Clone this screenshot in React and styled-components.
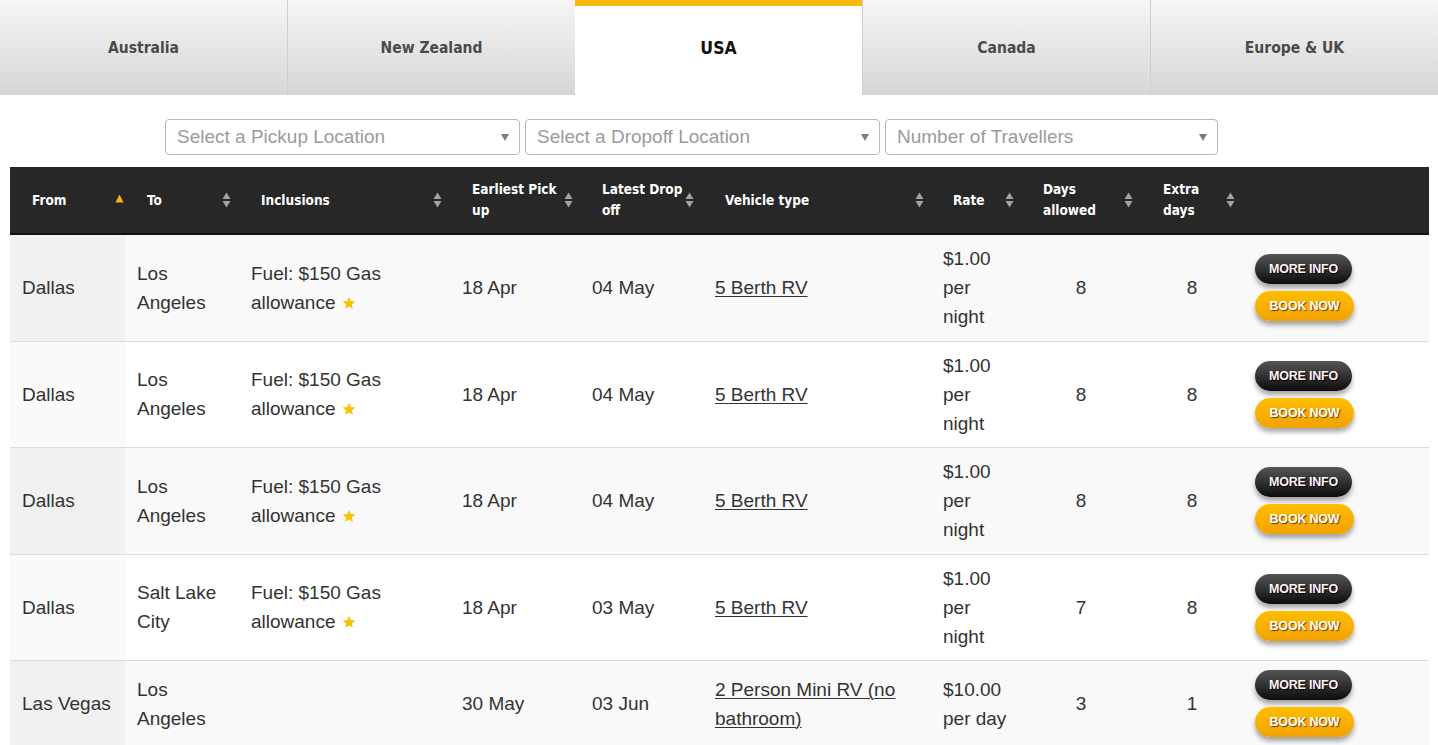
import React from 'react';
import styled, { createGlobalStyle } from 'styled-components';

const Global = createGlobalStyle`
  html, body { margin: 0; padding: 0; background: #fff; }
  body { font-family: "Liberation Sans", Arial, sans-serif; color: #333; }
`;

const condensed = `"DejaVu Sans Condensed", "DejaVu Sans", sans-serif`;

const TabBar = styled.nav`
  display: flex;
  height: 95px;
`;

const Tab = styled.div`
  flex: 1;
  box-sizing: border-box;
  display: flex;
  align-items: center;
  justify-content: center;
  font-family: ${condensed};
  font-stretch: condensed;
  font-weight: bold;
  font-size: ${p => (p.$active ? '17.5px' : '15.5px')};
  color: ${p => (p.$active ? '#111' : '#4a4a4a')};
  background: ${p => (p.$active ? '#fff' : 'linear-gradient(#f6f6f6, #d6d6d6)')};
  border-top: ${p => (p.$active ? '6px solid #fbb812' : '0')};
  padding-bottom: ${p => (p.$active ? '6px' : '0')};
  border-left: ${p => (p.$first || p.$active ? '0' : '1px solid #cdced6')};
`;

const Filters = styled.div`
  display: flex;
  gap: 5px;
  padding: 24px 0 0 165px;
`;

const SelectBox = styled.div`
  box-sizing: border-box;
  width: ${p => p.$w}px;
  height: 36px;
  border: 1px solid #b9b9b9;
  border-radius: 4px;
  background: #fff;
  display: flex;
  align-items: center;
  justify-content: space-between;
  padding: 0 10px 0 11px;
  font-size: 19px;
  color: #9b9b9b;
`;

const Caret = styled.span`
  width: 0;
  height: 0;
  border-left: 4.5px solid transparent;
  border-right: 4.5px solid transparent;
  border-top: 7px solid #7d7d7d;
`;

const Table = styled.table`
  margin: 12px 10px 0;
  width: 1419px;
  table-layout: fixed;
  border-collapse: collapse;
`;

const Th = styled.th`
  position: relative;
  background: #272727;
  color: #fff;
  font-family: ${condensed};
  font-stretch: condensed;
  font-weight: bold;
  font-size: 13.5px;
  line-height: 21px;
  text-align: left;
  white-space: nowrap;
  padding: 12px 16px 12px 22px;
  height: 42px;
  border-bottom: 2px solid #111;
`;

const SortIcon = styled.svg`
  position: absolute;
  top: 50%;
  right: ${p => p.$right}px;
  transform: translateY(-50%);
`;

const Row = styled.tr`
  background: ${p => (p.$odd ? '#f9f9f9' : '#fff')};
`;

const Td = styled.td`
  padding: 9px 12px 9.5px;
  font-size: 19px;
  line-height: 29px;
  color: #333;
  border-top: 1px solid #dcdcdc;
  vertical-align: middle;
  text-align: ${p => (p.$center ? 'center' : 'left')};
`;

const SortedTd = styled(Td)`
  background: ${p => (p.$odd ? '#f1f1f1' : '#fafafa')};
`;

const StarIcon = styled.svg`
  margin-left: 6px;
  vertical-align: -1px;
`;

const VehicleLink = styled.a`
  color: #333;
  text-decoration: underline;
  text-underline-offset: 2px;
  text-decoration-thickness: 1px;
`;

const Actions = styled.div`
  display: flex;
  flex-direction: column;
  align-items: flex-start;
  gap: 7px;
`;

const Btn = styled.button`
  width: ${p => (p.$book ? 99 : 97)}px;
  height: 30px;
  border: 0;
  border-radius: 15px;
  padding: 0;
  font-family: "Liberation Sans", Arial, sans-serif;
  font-weight: bold;
  font-size: 12.5px;
  letter-spacing: -0.2px;
  color: ${p => (p.$book ? '#fff' : '#fff2f6')};
  text-shadow: ${p => (p.$book ? '1px 1px 1px #6b3f00' : '1px 1px 1px #000')};
  background: ${p => (p.$book ? 'linear-gradient(#ffbe00, #f2a200)' : 'linear-gradient(#565656, #0c0c0c)')};
  box-shadow: 0 4px 5px rgba(0, 0, 0, 0.35);
  cursor: pointer;
`;

const Star = () => (
  <StarIcon width="14" height="14" viewBox="0 0 24 24" aria-hidden="true">
    <polygon
      points="12,1.5 15.1,8.6 22.8,9.3 17,14.4 18.7,22 12,18 5.3,22 7,14.4 1.2,9.3 8.9,8.6"
      fill="#f8c400"
    />
  </StarIcon>
);

const SortArrows = ({ right = 8, asc }) =>
  asc ? (
    <SortIcon $right={right} width="9" height="17" viewBox="0 0 9 17">
      <polygon points="4.5,3 8.5,11 0.5,11" fill="#f8b512" />
    </SortIcon>
  ) : (
    <SortIcon $right={right} width="9" height="17" viewBox="0 0 9 17">
      <polygon points="4.5,1 8.5,7.5 0.5,7.5" fill="#a3a3a3" />
      <polygon points="0.5,9.5 8.5,9.5 4.5,16" fill="#a3a3a3" />
    </SortIcon>
  );

const columns = [
  { w: 115, label: 'From', asc: true, right: 1 },
  { w: 114, label: 'To', right: 8 },
  { w: 211, label: 'Inclusions', right: 8 },
  { w: 130, label: ['Earliest Pick', 'up'], right: 7 },
  { w: 123, label: ['Latest Drop', 'off'], right: 9 },
  { w: 228, label: 'Vehicle type', right: 7 },
  { w: 90, label: 'Rate', right: 7 },
  { w: 120, label: ['Days', 'allowed'], right: 8 },
  { w: 102, label: ['Extra', 'days'], right: 8 },
  { w: 186, label: null },
];

const rows = [
  { from: 'Dallas', to: 'Los Angeles', fuel: true, pick: '18 Apr', drop: '04 May', vehicle: '5 Berth RV', rate: '$1.00 per night', days: 8, extra: 8 },
  { from: 'Dallas', to: 'Los Angeles', fuel: true, pick: '18 Apr', drop: '04 May', vehicle: '5 Berth RV', rate: '$1.00 per night', days: 8, extra: 8 },
  { from: 'Dallas', to: 'Los Angeles', fuel: true, pick: '18 Apr', drop: '04 May', vehicle: '5 Berth RV', rate: '$1.00 per night', days: 8, extra: 8 },
  { from: 'Dallas', to: 'Salt Lake City', fuel: true, pick: '18 Apr', drop: '03 May', vehicle: '5 Berth RV', rate: '$1.00 per night', days: 7, extra: 8 },
  { from: 'Las Vegas', to: 'Los Angeles', fuel: false, pick: '30 May', drop: '03 Jun', vehicle: '2 Person Mini RV (no bathroom)', rate: '$10.00 per day', days: 3, extra: 1 },
];

const tabs = ['Australia', 'New Zealand', 'USA', 'Canada', 'Europe & UK'];
const activeIdx = 2;

export default function App() {
  return (
    <>
      <Global />
      <TabBar>
        {tabs.map((t, i) => (
          <Tab key={t} $active={i === activeIdx} $first={i === 0}>
            {t}
          </Tab>
        ))}
      </TabBar>
      <Filters>
        <SelectBox $w={355}>
          <span>Select a Pickup Location</span>
          <Caret />
        </SelectBox>
        <SelectBox $w={355}>
          <span>Select a Dropoff Location</span>
          <Caret />
        </SelectBox>
        <SelectBox $w={333}>
          <span>Number of Travellers</span>
          <Caret />
        </SelectBox>
      </Filters>
      <Table>
        <colgroup>
          {columns.map((c, i) => (
            <col key={i} style={{ width: c.w }} />
          ))}
        </colgroup>
        <thead>
          <tr>
            {columns.map((c, i) => (
              <Th key={i}>
                {Array.isArray(c.label) ? (
                  <>
                    {c.label[0]}
                    <br />
                    {c.label[1]}
                  </>
                ) : (
                  c.label
                )}
                {c.label && <SortArrows right={c.right} asc={c.asc} />}
              </Th>
            ))}
          </tr>
        </thead>
        <tbody>
          {rows.map((r, i) => {
            const odd = i % 2 === 0;
            return (
              <Row key={i} $odd={odd}>
                <SortedTd $odd={odd}>{r.from}</SortedTd>
                <Td>{r.to}</Td>
                <Td>
                  {r.fuel && (
                    <>
                      Fuel: $150 Gas allowance
                      <Star />
                    </>
                  )}
                </Td>
                <Td>{r.pick}</Td>
                <Td>{r.drop}</Td>
                <Td>
                  <VehicleLink href="#">{r.vehicle}</VehicleLink>
                </Td>
                <Td>{r.rate}</Td>
                <Td $center>{r.days}</Td>
                <Td $center>{r.extra}</Td>
                <Td>
                  <Actions>
                    <Btn>MORE INFO</Btn>
                    <Btn $book>BOOK NOW</Btn>
                  </Actions>
                </Td>
              </Row>
            );
          })}
        </tbody>
      </Table>
    </>
  );
}
